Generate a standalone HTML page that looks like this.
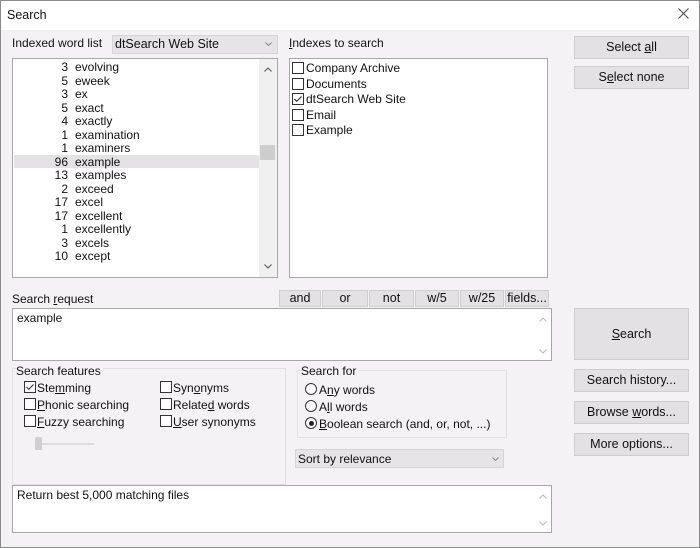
<!DOCTYPE html>
<html><head><meta charset="utf-8"><style>
*{box-sizing:border-box;margin:0;padding:0}
body{width:700px;height:548px;overflow:hidden;background:#f4f2f4;font-family:"Liberation Sans",sans-serif;font-size:12px;color:#111;position:relative}
.a{position:absolute;white-space:nowrap}
.win{position:absolute;left:0;top:0;width:700px;height:548px;border:1px solid #8a8a8a}
.title{position:absolute;left:1px;top:1px;width:698px;height:29px;background:#fff}
.box{position:absolute;background:#fff;border:1px solid #a8a8a8}
.btn{position:absolute;background:#e3e1e3;border:1px solid #cfcdcf;text-align:center;font-size:12.5px}
.cb{position:absolute;width:12px;height:12px;border:1px solid #333;background:#fff}
.rb{position:absolute;width:12px;height:12px;border:1px solid #333;border-radius:50%;background:#fff}
.grp{position:absolute;border:1px solid #e2e0e2}
.combo{position:absolute;background:#e6e4e6;border:1px solid #d6d4d6}
svg.i{position:absolute}
.row{position:absolute;left:14px;width:245px;height:13.5px;line-height:13.5px;font-size:12px}
.row .n{position:absolute;right:191px}
.row .w{position:absolute;left:61px}
u{text-decoration:underline}
</style></head><body>
<div class="win"></div>
<div class="title"></div>
<div class="a" style="left:7px;top:8px;font-size:12.5px">Search</div>
<svg class="i" style="left:678px;top:8px" width="11" height="11"><path d="M0.5 0.5L10.5 10.5M10.5 0.5L0.5 10.5" stroke="#444" stroke-width="1"/></svg>

<div class="a" style="left:12px;top:36px">Indexed word list</div>
<div class="combo" style="left:112px;top:35px;width:166px;height:19px"></div>
<div class="a" style="left:115px;top:37px;font-size:12.5px">dtSearch Web Site</div>
<svg class="i" style="left:265px;top:42px" width="7" height="4"><path d="M0.5 0.5L3.5 3.5L6.5 0.5" stroke="#888" fill="none"/></svg>

<div class="box" style="left:12px;top:58px;width:266px;height:220px"></div>
<div style="position:absolute;left:259px;top:59px;width:18px;height:218px;background:#f0f0f0"></div>
<div style="position:absolute;left:260px;top:145px;width:15px;height:15px;background:#cdcdcd"></div>
<svg class="i" style="left:264px;top:67px" width="8" height="5"><path d="M0.5 4.5L4 1L7.5 4.5" stroke="#555" fill="none"/></svg>
<svg class="i" style="left:264px;top:264px" width="8" height="5"><path d="M0.5 0.5L4 4L7.5 0.5" stroke="#555" fill="none"/></svg>
<div style="position:absolute;left:14px;top:155px;width:245px;height:13px;background:#e4e2e4"></div>
<div class="row" style="top:61px"><span class="n">3</span><span class="w">evolving</span></div>
<div class="row" style="top:74.5px"><span class="n">5</span><span class="w">eweek</span></div>
<div class="row" style="top:88px"><span class="n">3</span><span class="w">ex</span></div>
<div class="row" style="top:101.5px"><span class="n">5</span><span class="w">exact</span></div>
<div class="row" style="top:115px"><span class="n">4</span><span class="w">exactly</span></div>
<div class="row" style="top:128.5px"><span class="n">1</span><span class="w">examination</span></div>
<div class="row" style="top:142px"><span class="n">1</span><span class="w">examiners</span></div>
<div class="row" style="top:155.5px"><span class="n">96</span><span class="w">example</span></div>
<div class="row" style="top:169px"><span class="n">13</span><span class="w">examples</span></div>
<div class="row" style="top:182.5px"><span class="n">2</span><span class="w">exceed</span></div>
<div class="row" style="top:196px"><span class="n">17</span><span class="w">excel</span></div>
<div class="row" style="top:209.5px"><span class="n">17</span><span class="w">excellent</span></div>
<div class="row" style="top:223px"><span class="n">1</span><span class="w">excellently</span></div>
<div class="row" style="top:236.5px"><span class="n">3</span><span class="w">excels</span></div>
<div class="row" style="top:250px"><span class="n">10</span><span class="w">except</span></div>

<div class="a" style="left:289px;top:36px"><u>I</u>ndexes to search</div>
<div class="box" style="left:289px;top:58px;width:259px;height:220px"></div>
<div class="cb" style="left:292px;top:62px"></div><div class="a" style="left:306px;top:61px">Company Archive</div>
<div class="cb" style="left:292px;top:78px"></div><div class="a" style="left:306px;top:77px">Documents</div>
<div class="cb" style="left:292px;top:93px"></div><svg class="i" style="left:294px;top:96px" width="8" height="6"><path d="M0.5 3L2.8 5.3L7.5 0.5" stroke="#222" fill="none"/></svg><div class="a" style="left:306px;top:92px">dtSearch Web Site</div>
<div class="cb" style="left:292px;top:109px"></div><div class="a" style="left:306px;top:108px">Email</div>
<div class="cb" style="left:292px;top:124px"></div><div class="a" style="left:306px;top:123px">Example</div>

<div class="btn" style="left:574px;top:36px;width:115px;height:23px;line-height:21px">Select <u>a</u>ll</div>
<div class="btn" style="left:574px;top:66px;width:115px;height:23px;line-height:21px">S<u>e</u>lect none</div>

<div class="a" style="left:12px;top:292px">Search <u>r</u>equest</div>
<div class="btn" style="left:279px;top:290px;width:42px;height:17px;line-height:15px">and</div>
<div class="btn" style="left:322px;top:290px;width:46px;height:17px;line-height:15px">or</div>
<div class="btn" style="left:369px;top:290px;width:45px;height:17px;line-height:15px">not</div>
<div class="btn" style="left:415px;top:290px;width:44px;height:17px;line-height:15px">w/5</div>
<div class="btn" style="left:460px;top:290px;width:44px;height:17px;line-height:15px">w/25</div>
<div class="btn" style="left:505px;top:290px;width:44px;height:17px;line-height:15px">fields...</div>
<div class="box" style="left:12px;top:308px;width:540px;height:53px"></div>
<div class="a" style="left:17px;top:311px">example</div>
<svg class="i" style="left:539px;top:317px" width="8" height="5"><path d="M0.5 4.5L4 1L7.5 4.5" stroke="#bbb" fill="none"/></svg>
<svg class="i" style="left:539px;top:349px" width="8" height="5"><path d="M0.5 0.5L4 4L7.5 0.5" stroke="#bbb" fill="none"/></svg>
<div class="btn" style="left:574px;top:308px;width:115px;height:52px;line-height:50px"><u>S</u>earch</div>

<div class="grp" style="left:12px;top:368px;width:274px;height:117px"></div>
<div class="a" style="left:16px;top:364px;background:#f4f2f4;padding-right:2px">Search features</div>
<div class="cb" style="left:24px;top:381px"></div><svg class="i" style="left:26px;top:384px" width="8" height="6"><path d="M0.5 3L2.8 5.3L7.5 0.5" stroke="#222" fill="none"/></svg><div class="a" style="left:37px;top:381px">Ste<u>m</u>ming</div>
<div class="cb" style="left:24px;top:398px"></div><div class="a" style="left:37px;top:398px"><u>P</u>honic searching</div>
<div class="cb" style="left:24px;top:415px"></div><div class="a" style="left:37px;top:415px"><u>F</u>uzzy searching</div>
<div class="cb" style="left:160px;top:381px"></div><div class="a" style="left:173px;top:381px">Syn<u>o</u>nyms</div>
<div class="cb" style="left:160px;top:398px"></div><div class="a" style="left:173px;top:398px">Relate<u>d</u> words</div>
<div class="cb" style="left:160px;top:415px"></div><div class="a" style="left:173px;top:415px"><u>U</u>ser synonyms</div>
<div style="position:absolute;left:38px;top:443px;width:56px;height:2px;background:#ddd"></div>
<div style="position:absolute;left:35px;top:437px;width:7px;height:13px;background:#d0d0d0;border-radius:2px 2px 0 0"></div>

<div class="grp" style="left:297px;top:370px;width:210px;height:68px"></div>
<div class="a" style="left:301px;top:364px;background:#f4f2f4;padding-right:2px">Search for</div>
<div class="rb" style="left:305px;top:383px"></div><div class="a" style="left:319px;top:383px">A<u>n</u>y words</div>
<div class="rb" style="left:305px;top:400px"></div><div class="a" style="left:319px;top:400px">A<u>l</u>l words</div>
<div class="rb" style="left:305px;top:417px"></div><div style="position:absolute;left:309px;top:421px;width:5px;height:5px;border-radius:50%;background:#222"></div><div class="a" style="left:319px;top:417px"><u>B</u>oolean search (and, or, not, ...)</div>

<div class="combo" style="left:295px;top:449px;width:209px;height:19px"></div>
<div class="a" style="left:298px;top:452px">Sort by relevance</div>
<svg class="i" style="left:492px;top:457px" width="7" height="4"><path d="M0.5 0.5L3.5 3.5L6.5 0.5" stroke="#888" fill="none"/></svg>

<div class="btn" style="left:574px;top:369px;width:115px;height:23px;line-height:21px">Search history...</div>
<div class="btn" style="left:574px;top:401px;width:115px;height:23px;line-height:21px">Browse <u>w</u>ords...</div>
<div class="btn" style="left:574px;top:433px;width:115px;height:23px;line-height:21px">More options...</div>

<div class="box" style="left:12px;top:485px;width:540px;height:48px"></div>
<div class="a" style="left:17px;top:488px">Return best 5,000 matching files</div>
<svg class="i" style="left:539px;top:494px" width="8" height="5"><path d="M0.5 4.5L4 1L7.5 4.5" stroke="#bbb" fill="none"/></svg>
<svg class="i" style="left:539px;top:521px" width="8" height="5"><path d="M0.5 0.5L4 4L7.5 0.5" stroke="#bbb" fill="none"/></svg>
</body></html>
